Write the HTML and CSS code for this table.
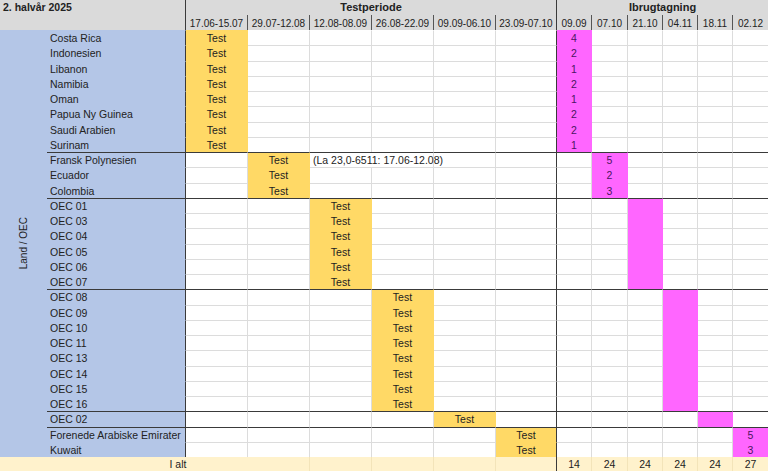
FILE: index.html
```html
<!DOCTYPE html>
<html lang="da">
<head>
<meta charset="utf-8">
<title>2. halvår 2025</title>
<link rel="stylesheet" href="styles.css">
</head>
<body>
<div class="sheet">
  <div class="head">
    <div class="title">2. halvår 2025</div>
    <div class="group-title tp">Testperiode</div>
    <div class="group-title ib">Ibrugtagning</div>
    <div class="date">17.06-15.07</div>
    <div class="date">29.07-12.08</div>
    <div class="date">12.08-08.09</div>
    <div class="date">26.08-22.09</div>
    <div class="date">09.09-06.10</div>
    <div class="date d">23.09-07.10</div>
    <div class="date">09.09</div>
    <div class="date">07.10</div>
    <div class="date">21.10</div>
    <div class="date">04.11</div>
    <div class="date">18.11</div>
    <div class="date last">02.12</div>
  </div>

  <div class="body">
    <div class="side"><span class="side-label">Land / OEC</span></div>
    <div class="rows">
      <!-- Group 1 -->
      <div class="row"><span class="n">Costa Rica</span><span class="c y">Test</span><span class="c"></span><span class="c"></span><span class="c"></span><span class="c"></span><span class="c d"></span><span class="c m">4</span><span class="c"></span><span class="c"></span><span class="c"></span><span class="c"></span><span class="c"></span></div>
      <div class="row"><span class="n">Indonesien</span><span class="c y">Test</span><span class="c"></span><span class="c"></span><span class="c"></span><span class="c"></span><span class="c d"></span><span class="c m">2</span><span class="c"></span><span class="c"></span><span class="c"></span><span class="c"></span><span class="c"></span></div>
      <div class="row"><span class="n">Libanon</span><span class="c y">Test</span><span class="c"></span><span class="c"></span><span class="c"></span><span class="c"></span><span class="c d"></span><span class="c m">1</span><span class="c"></span><span class="c"></span><span class="c"></span><span class="c"></span><span class="c"></span></div>
      <div class="row"><span class="n">Namibia</span><span class="c y">Test</span><span class="c"></span><span class="c"></span><span class="c"></span><span class="c"></span><span class="c d"></span><span class="c m">2</span><span class="c"></span><span class="c"></span><span class="c"></span><span class="c"></span><span class="c"></span></div>
      <div class="row"><span class="n">Oman</span><span class="c y">Test</span><span class="c"></span><span class="c"></span><span class="c"></span><span class="c"></span><span class="c d"></span><span class="c m">1</span><span class="c"></span><span class="c"></span><span class="c"></span><span class="c"></span><span class="c"></span></div>
      <div class="row"><span class="n">Papua Ny Guinea</span><span class="c y">Test</span><span class="c"></span><span class="c"></span><span class="c"></span><span class="c"></span><span class="c d"></span><span class="c m">2</span><span class="c"></span><span class="c"></span><span class="c"></span><span class="c"></span><span class="c"></span></div>
      <div class="row"><span class="n">Saudi Arabien</span><span class="c y">Test</span><span class="c"></span><span class="c"></span><span class="c"></span><span class="c"></span><span class="c d"></span><span class="c m">2</span><span class="c"></span><span class="c"></span><span class="c"></span><span class="c"></span><span class="c"></span></div>
      <div class="row"><span class="n">Surinam</span><span class="c y">Test</span><span class="c"></span><span class="c"></span><span class="c"></span><span class="c"></span><span class="c d"></span><span class="c m">1</span><span class="c"></span><span class="c"></span><span class="c"></span><span class="c"></span><span class="c"></span></div>
      <!-- Group 2 -->
      <div class="row first"><span class="n">Fransk Polynesien</span><span class="c"></span><span class="c y">Test</span><span class="c note">(La 23,0-6511: 17.06-12.08)</span><span class="c"></span><span class="c d"></span><span class="c"></span><span class="c m">5</span><span class="c"></span><span class="c"></span><span class="c"></span><span class="c"></span></div>
      <div class="row"><span class="n">Ecuador</span><span class="c"></span><span class="c y">Test</span><span class="c"></span><span class="c"></span><span class="c"></span><span class="c d"></span><span class="c"></span><span class="c m">2</span><span class="c"></span><span class="c"></span><span class="c"></span><span class="c"></span></div>
      <div class="row"><span class="n">Colombia</span><span class="c"></span><span class="c y">Test</span><span class="c"></span><span class="c"></span><span class="c"></span><span class="c d"></span><span class="c"></span><span class="c m">3</span><span class="c"></span><span class="c"></span><span class="c"></span><span class="c"></span></div>
      <!-- Group 3 -->
      <div class="row first"><span class="n">OEC 01</span><span class="c"></span><span class="c"></span><span class="c y">Test</span><span class="c"></span><span class="c"></span><span class="c d"></span><span class="c"></span><span class="c"></span><span class="c m"></span><span class="c"></span><span class="c"></span><span class="c"></span></div>
      <div class="row"><span class="n">OEC 03</span><span class="c"></span><span class="c"></span><span class="c y">Test</span><span class="c"></span><span class="c"></span><span class="c d"></span><span class="c"></span><span class="c"></span><span class="c m"></span><span class="c"></span><span class="c"></span><span class="c"></span></div>
      <div class="row"><span class="n">OEC 04</span><span class="c"></span><span class="c"></span><span class="c y">Test</span><span class="c"></span><span class="c"></span><span class="c d"></span><span class="c"></span><span class="c"></span><span class="c m"></span><span class="c"></span><span class="c"></span><span class="c"></span></div>
      <div class="row"><span class="n">OEC 05</span><span class="c"></span><span class="c"></span><span class="c y">Test</span><span class="c"></span><span class="c"></span><span class="c d"></span><span class="c"></span><span class="c"></span><span class="c m"></span><span class="c"></span><span class="c"></span><span class="c"></span></div>
      <div class="row"><span class="n">OEC 06</span><span class="c"></span><span class="c"></span><span class="c y">Test</span><span class="c"></span><span class="c"></span><span class="c d"></span><span class="c"></span><span class="c"></span><span class="c m"></span><span class="c"></span><span class="c"></span><span class="c"></span></div>
      <div class="row"><span class="n">OEC 07</span><span class="c"></span><span class="c"></span><span class="c y">Test</span><span class="c"></span><span class="c"></span><span class="c d"></span><span class="c"></span><span class="c"></span><span class="c m"></span><span class="c"></span><span class="c"></span><span class="c"></span></div>
      <!-- Group 4 -->
      <div class="row first"><span class="n">OEC 08</span><span class="c"></span><span class="c"></span><span class="c"></span><span class="c y">Test</span><span class="c"></span><span class="c d"></span><span class="c"></span><span class="c"></span><span class="c"></span><span class="c m"></span><span class="c"></span><span class="c"></span></div>
      <div class="row"><span class="n">OEC 09</span><span class="c"></span><span class="c"></span><span class="c"></span><span class="c y">Test</span><span class="c"></span><span class="c d"></span><span class="c"></span><span class="c"></span><span class="c"></span><span class="c m"></span><span class="c"></span><span class="c"></span></div>
      <div class="row"><span class="n">OEC 10</span><span class="c"></span><span class="c"></span><span class="c"></span><span class="c y">Test</span><span class="c"></span><span class="c d"></span><span class="c"></span><span class="c"></span><span class="c"></span><span class="c m"></span><span class="c"></span><span class="c"></span></div>
      <div class="row"><span class="n">OEC 11</span><span class="c"></span><span class="c"></span><span class="c"></span><span class="c y">Test</span><span class="c"></span><span class="c d"></span><span class="c"></span><span class="c"></span><span class="c"></span><span class="c m"></span><span class="c"></span><span class="c"></span></div>
      <div class="row"><span class="n">OEC 13</span><span class="c"></span><span class="c"></span><span class="c"></span><span class="c y">Test</span><span class="c"></span><span class="c d"></span><span class="c"></span><span class="c"></span><span class="c"></span><span class="c m"></span><span class="c"></span><span class="c"></span></div>
      <div class="row"><span class="n">OEC 14</span><span class="c"></span><span class="c"></span><span class="c"></span><span class="c y">Test</span><span class="c"></span><span class="c d"></span><span class="c"></span><span class="c"></span><span class="c"></span><span class="c m"></span><span class="c"></span><span class="c"></span></div>
      <div class="row"><span class="n">OEC 15</span><span class="c"></span><span class="c"></span><span class="c"></span><span class="c y">Test</span><span class="c"></span><span class="c d"></span><span class="c"></span><span class="c"></span><span class="c"></span><span class="c m"></span><span class="c"></span><span class="c"></span></div>
      <div class="row"><span class="n">OEC 16</span><span class="c"></span><span class="c"></span><span class="c"></span><span class="c y">Test</span><span class="c"></span><span class="c d"></span><span class="c"></span><span class="c"></span><span class="c"></span><span class="c m"></span><span class="c"></span><span class="c"></span></div>
      <!-- Group 5 -->
      <div class="row first"><span class="n">OEC 02</span><span class="c"></span><span class="c"></span><span class="c"></span><span class="c"></span><span class="c y">Test</span><span class="c d"></span><span class="c"></span><span class="c"></span><span class="c"></span><span class="c"></span><span class="c m"></span><span class="c"></span></div>
      <!-- Group 6 -->
      <div class="row first"><span class="n">Forenede Arabiske Emirater</span><span class="c"></span><span class="c"></span><span class="c"></span><span class="c"></span><span class="c"></span><span class="c d y">Test</span><span class="c"></span><span class="c"></span><span class="c"></span><span class="c"></span><span class="c"></span><span class="c m">5</span></div>
      <div class="row"><span class="n">Kuwait</span><span class="c"></span><span class="c"></span><span class="c"></span><span class="c"></span><span class="c"></span><span class="c d y">Test</span><span class="c"></span><span class="c"></span><span class="c"></span><span class="c"></span><span class="c"></span><span class="c m">3</span></div>
    </div>
  </div>

  <div class="foot">
    <span class="f"></span>
    <span class="f total-label">I alt</span>
    <span class="f"></span>
    <span class="f"></span>
    <span class="f"></span>
    <span class="f d"></span>
    <span class="f">14</span>
    <span class="f">24</span>
    <span class="f">24</span>
    <span class="f">24</span>
    <span class="f">24</span>
    <span class="f">27</span>
  </div>
</div>
</body>
</html>
```
FILE: styles.css
```css
* { box-sizing: border-box; }

html, body {
  margin: 0;
  padding: 0;
  background: #ffffff;
}

body {
  font-family: "Liberation Sans", Arial, sans-serif;
  font-size: 10.5px;
  color: #222222;
  width: 768px;
  overflow: hidden;
}

.sheet {
  width: 768px;
}

/* ---------- header ---------- */
.head {
  display: grid;
  grid-template-columns: 186px 62px 62px 62px 62px 62px 61px 35px 36px 35px 35px 35px 35px;
  grid-template-rows: 15px 15px;
  background: #dadada;
}

.title {
  grid-column: 1;
  grid-row: 1 / 3;
  border-right: 1px solid #3a3a3a;
  font-weight: bold;
  font-size: 10.5px;
  line-height: 15px;
  padding-left: 3px;
}

.group-title {
  grid-row: 1;
  font-weight: bold;
  font-size: 11px;
  line-height: 15px;
  text-align: center;
}

.tp {
  grid-column: 2 / 8;
  border-right: 1px solid #3a3a3a;
}

.ib {
  grid-column: 8 / 14;
}

.date {
  grid-row: 2;
  font-size: 10px;
  line-height: 15px;
  text-align: center;
  border-right: 1px solid #555555;
  padding-top: 1px;
}

.date.d {
  border-right-color: #3a3a3a;
}

.date.last {
  border-right: none;
}

/* ---------- body ---------- */
.body {
  display: grid;
  grid-template-columns: 47px 721px;
}

.side {
  background: #b4c6e7;
  display: flex;
  align-items: center;
  justify-content: center;
}

.side-label {
  writing-mode: vertical-rl;
  transform: rotate(180deg);
  font-size: 10px;
  color: #222222;
}

.rows {
  display: grid;
  grid-auto-rows: 15.25px;
}

.row {
  display: grid;
  grid-template-columns: 139px 62px 62px 62px 62px 62px 61px 35px 36px 35px 35px 35px 35px;
}

.n {
  background: #b4c6e7;
  border-top: 1px solid transparent;
  border-right: 1px solid #3a3a3a;
  padding-left: 3px;
  line-height: 14px;
  white-space: nowrap;
}

.c {
  border-top: 1px solid #dcdcdc;
  border-right: 1px solid #dcdcdc;
  text-align: center;
  line-height: 14px;
  white-space: nowrap;
}

.c:last-child {
  border-right: none;
}

.y {
  background: #ffd966;
  border-top-color: transparent;
  border-right-color: transparent;
}

.m {
  background: #ff66ff;
  border-top-color: transparent;
  border-right-color: transparent;
  color: #4a1660;
}

.c.d {
  border-right-color: #3a3a3a;
}

.note {
  text-align: left;
  padding-left: 3px;
  overflow: visible;
  grid-column: span 2;
}

.row.first > .n,
.row.first > .c {
  border-top-color: #3a3a3a;
}

.row:first-child > .c,
.row:first-child > .n {
  border-top-color: transparent;
}

/* ---------- footer ---------- */
.foot {
  display: grid;
  grid-template-columns: 47px 263px 62px 62px 62px 61px 35px 36px 35px 35px 35px 35px;
  height: 15px;
  background: #fff2cc;
}

.f {
  text-align: center;
  line-height: 15px;
  border-right: 1px solid #f3e4b9;
}

.f:first-child {
  border-right: none;
}

.f:last-child {
  border-right: none;
}

.f.d {
  border-right-color: #3a3a3a;
}

.total-label {
  border-right-color: #f3e4b9;
}
```
